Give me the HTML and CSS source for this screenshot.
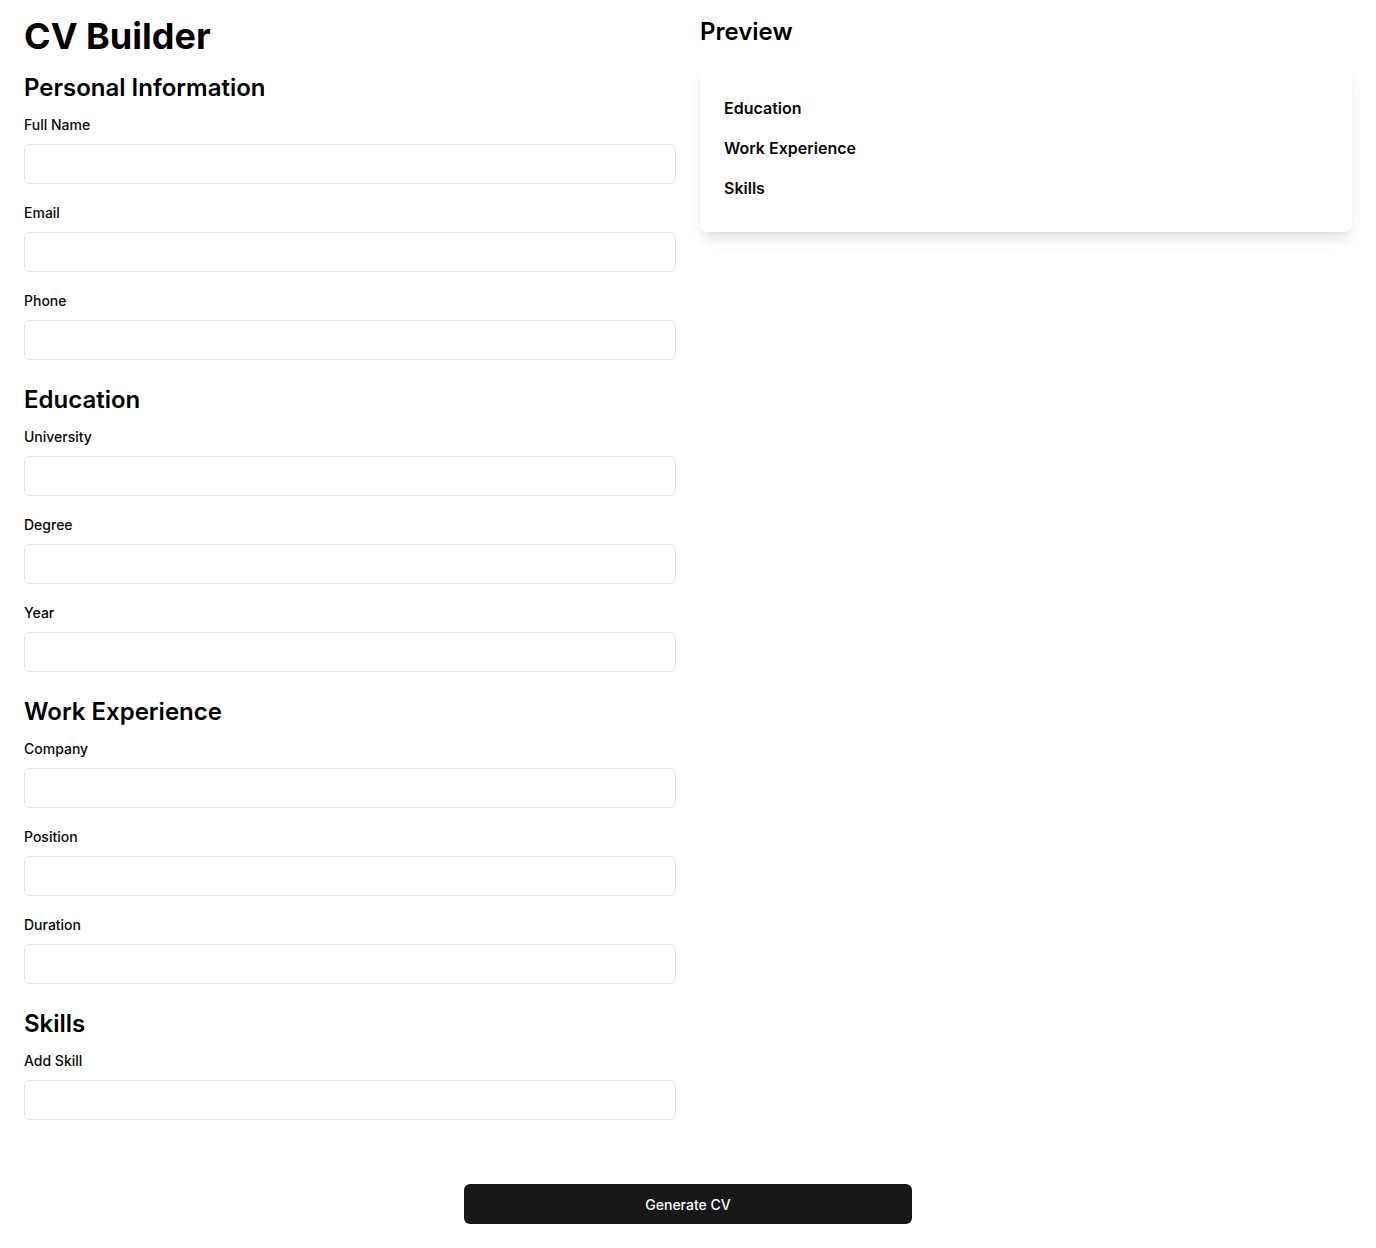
FILE: index.html
```html
<!DOCTYPE html>
<html lang="en">
<head>
<meta charset="utf-8">
<title>CV Builder</title>
<link rel="stylesheet" href="styles.css">
</head>
<body>
<div class="page">
  <div class="columns">
    <div class="form-col">
      <h1 class="title">CV Builder</h1>
      <section class="section">
        <h2 class="section-title">Personal Information</h2>
        <div class="fields">
          <div class="field"><label class="label">Full Name</label><input class="input" type="text"></div>
          <div class="field"><label class="label">Email</label><input class="input" type="text"></div>
          <div class="field"><label class="label">Phone</label><input class="input" type="text"></div>
        </div>
      </section>
      <section class="section">
        <h2 class="section-title">Education</h2>
        <div class="fields">
          <div class="field"><label class="label">University</label><input class="input" type="text"></div>
          <div class="field"><label class="label">Degree</label><input class="input" type="text"></div>
          <div class="field"><label class="label">Year</label><input class="input" type="text"></div>
        </div>
      </section>
      <section class="section">
        <h2 class="section-title">Work Experience</h2>
        <div class="fields">
          <div class="field"><label class="label">Company</label><input class="input" type="text"></div>
          <div class="field"><label class="label">Position</label><input class="input" type="text"></div>
          <div class="field"><label class="label">Duration</label><input class="input" type="text"></div>
        </div>
      </section>
      <section class="section">
        <h2 class="section-title">Skills</h2>
        <div class="fields">
          <div class="field"><label class="label">Add Skill</label><input class="input" type="text"></div>
        </div>
      </section>
    </div>
    <div class="preview-col">
      <h2 class="preview-title">Preview</h2>
      <div class="card">
        <h3 class="card-item">Education</h3>
        <h3 class="card-item">Work Experience</h3>
        <h3 class="card-item">Skills</h3>
      </div>
    </div>
  </div>
  <div class="actions">
    <button class="button" type="button">Generate CV</button>
  </div>
</div>
</body>
</html>
```
FILE: styles.css
```css
* { box-sizing: border-box; }
html, body { margin: 0; padding: 0; background: #ffffff; }
body {
  font-family: Inter, "Liberation Sans", sans-serif;
  color: #09090b;
}
.page {
  padding: 16px 24px 24px;
}
.columns {
  display: grid;
  grid-template-columns: 1fr 1fr;
  gap: 24px;
  align-items: start;
}
.form-col {
  display: flex;
  flex-direction: column;
  gap: 24px;
}
.title {
  margin: 0 0 -8px;
  font-size: 36px;
  line-height: 40px;
  font-weight: 700;
  color: #000;
}
.section {
  display: flex;
  flex-direction: column;
  gap: 12px;
}
.section-title, .preview-title {
  margin: 0;
  font-size: 24px;
  line-height: 32px;
  font-weight: 600;
  color: #000;
}
.fields {
  display: flex;
  flex-direction: column;
  gap: 20px;
}
.field {
  display: flex;
  flex-direction: column;
  gap: 10px;
}
.label {
  font-size: 14px;
  line-height: 18px;
  font-weight: 500;
}
.input {
  height: 40px;
  width: 100%;
  border: 1px solid #e4e4e7;
  border-radius: 6px;
  background: #fff;
  padding: 8px 12px;
  font: inherit;
  font-size: 14px;
  outline: none;
}
.preview-col {
  display: flex;
  flex-direction: column;
  gap: 16px;
}
.card {
  background: #fff;
  border-radius: 8px;
  padding: 32px 24px;
  display: flex;
  flex-direction: column;
  gap: 16px;
  box-shadow: 0 10px 15px -3px rgba(0,0,0,0.1), 0 4px 6px -4px rgba(0,0,0,0.1);
}
.card-item {
  margin: 0;
  font-size: 16px;
  line-height: 24px;
  font-weight: 600;
}
.actions {
  display: flex;
  justify-content: center;
  margin-top: 64px;
}
.button {
  width: 100%;
  max-width: 448px;
  height: 40px;
  border: none;
  border-radius: 6px;
  background: #18181b;
  color: #fafafa;
  font-family: Inter, "Liberation Sans", sans-serif;
  font-size: 14px;
  font-weight: 500;
  cursor: pointer;
}
```
